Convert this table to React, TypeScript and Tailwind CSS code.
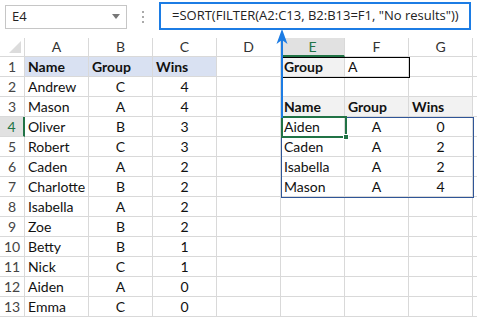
import React from "react";

const COLS = ["A", "B", "C", "D", "E", "F", "G"];

type Row = [string, string, string];

const DATA: Row[] = [
  ["Andrew", "C", "4"],
  ["Mason", "A", "4"],
  ["Oliver", "B", "3"],
  ["Robert", "C", "3"],
  ["Caden", "A", "2"],
  ["Charlotte", "B", "2"],
  ["Isabella", "A", "2"],
  ["Zoe", "B", "2"],
  ["Betty", "B", "1"],
  ["Nick", "C", "1"],
  ["Aiden", "A", "0"],
  ["Emma", "C", "0"],
];

const RESULTS: Row[] = [
  ["Aiden", "A", "0"],
  ["Caden", "A", "2"],
  ["Isabella", "A", "2"],
  ["Mason", "A", "4"],
];

const cell = "h-[20px] border-r border-b border-[#d9d9d9] px-[3px] leading-[19px] whitespace-nowrap overflow-hidden";

function Cell({ children, className = "" }: { children?: React.ReactNode; className?: string }) {
  return <div className={`${cell} ${className}`}>{children}</div>;
}

// contents of E..G for a given sheet row (1-based)
function rightSide(r: number): [React.ReactNode, React.ReactNode, React.ReactNode, string[]] {
  if (r === 1) return ["Group", "A", "", ["bg-[#f2f2f2] font-bold", "", ""]];
  if (r === 3) return ["Name", "Group", "Wins", ["bg-[#f2f2f2] font-bold", "bg-[#f2f2f2] font-bold", "bg-[#f2f2f2] font-bold"]];
  if (r >= 4 && r <= 7) {
    const [n, g, w] = RESULTS[r - 4];
    return [n, g, w, ["", "text-center", "text-center"]];
  }
  return ["", "", "", ["", "", ""]];
}

export default function App() {
  const rows = Array.from({ length: 13 }, (_, i) => i + 1);

  return (
    <div className="relative w-[477px] h-[318px] overflow-hidden bg-white text-[#111] font-['Lato','Liberation_Sans',sans-serif] text-[14px]">
      {/* name box + formula bar */}
      <div className="flex items-center h-[38px] pb-[8px]">
        <div className="ml-[5px] mt-[3px] w-[122px] h-[24px] border border-[#c6c6c6] flex items-center justify-between pl-[6px] pr-[6px] font-['Open_Sans',sans-serif] text-[13px] text-[#222]">
          <span>E4</span>
          <svg width="8" height="5" viewBox="0 0 8 5">
            <path d="M0 0h8L4 5z" fill="#777" />
          </svg>
        </div>
        <div className="w-[32px] flex flex-col items-center gap-[3px] mt-[3px]">
          <span className="w-[2px] h-[2px] bg-[#aaa]" />
          <span className="w-[2px] h-[2px] bg-[#aaa]" />
          <span className="w-[2px] h-[2px] bg-[#aaa]" />
        </div>
        <div className="w-[312px] h-[28px] mt-[1px] border-2 border-[#1c7ce4] flex items-center pl-[11px] font-['Open_Sans',sans-serif] text-[13px] text-[#222] whitespace-nowrap">
          =SORT(FILTER(A2:C13, B2:B13=F1, "No results"))
        </div>
      </div>

      {/* sheet grid */}
      <div className="grid grid-cols-[25px_repeat(7,64px)_1fr]">
        {/* column headers */}
        <div className="h-[19px] border-r border-b border-[#d9d9d9] relative">
          <svg className="absolute right-[3px] bottom-[3px]" width="12" height="12" viewBox="0 0 12 12">
            <path d="M12 0V12H0z" fill="#dcdcdc" />
          </svg>
        </div>
        {COLS.map((c) => (
          <div
            key={c}
            className={
              c === "E"
                ? "h-[19px] border-r border-[#d9d9d9] border-b-2 border-b-[#217346] bg-[#e1e1e1] text-[#217346] text-center text-[14px] leading-[18px]"
                : "h-[19px] border-r border-b border-[#d9d9d9] text-center text-[14px] leading-[18px] text-[#333]"
            }
          >
            {c}
          </div>
        ))}
        <div className="h-[19px] border-b border-[#d9d9d9]" />

        {rows.map((r) => {
          const [e, f, g, cls] = rightSide(r);
          const left = r === 1 ? null : DATA[r - 2];
          return (
            <React.Fragment key={r}>
              <div
                className={
                  r === 4
                    ? "h-[20px] border-r-2 border-r-[#217346] border-b border-[#d9d9d9] bg-[#e1e1e1] text-center text-[#217346] leading-[19px]"
                    : "h-[20px] border-r border-b border-[#d9d9d9] text-center text-[#444] leading-[19px]"
                }
              >
                {r}
              </div>
              {r === 1 ? (
                <>
                  <Cell className="bg-[#d9e1f2] font-bold">Name</Cell>
                  <Cell className="bg-[#d9e1f2] font-bold">Group</Cell>
                  <Cell className="bg-[#d9e1f2] font-bold">Wins</Cell>
                </>
              ) : (
                <>
                  <Cell>{left![0]}</Cell>
                  <Cell className="text-center">{left![1]}</Cell>
                  <Cell className="text-center">{left![2]}</Cell>
                </>
              )}
              <Cell />
              <Cell className={cls[0]}>{e}</Cell>
              <Cell className={cls[1]}>{f}</Cell>
              <Cell className={cls[2]}>{g}</Cell>
              <div className="h-[20px] border-b border-[#d9d9d9]" />
            </React.Fragment>
          );
        })}
      </div>

      {/* F1 criteria box */}
      <div className="absolute left-[281px] top-[57px] w-[129px] h-[21px] border border-black pointer-events-none" />
      {/* spilled result range */}
      <div className="absolute left-[281px] top-[117px] w-[193px] h-[81px] border border-[#2f5597] pointer-events-none" />
      {/* active cell E4 */}
      <div className="absolute left-[281px] top-[116px] w-[66px] h-[22px] border-2 border-[#217346] pointer-events-none" />
      <div className="absolute left-[343px] top-[134px] w-[6px] h-[6px] bg-[#217346] border border-white pointer-events-none" />

      {/* arrow from formula bar down to the result */}
      <svg className="absolute left-[275px] top-[29px] pointer-events-none" width="14" height="90" viewBox="0 0 14 90">
        <path d="M7 6V89" stroke="#1c7ce4" strokeWidth="2" />
        <path d="M7 0L1.5 15L7 11L12.5 15z" fill="#1c7ce4" />
      </svg>
    </div>
  );
}
